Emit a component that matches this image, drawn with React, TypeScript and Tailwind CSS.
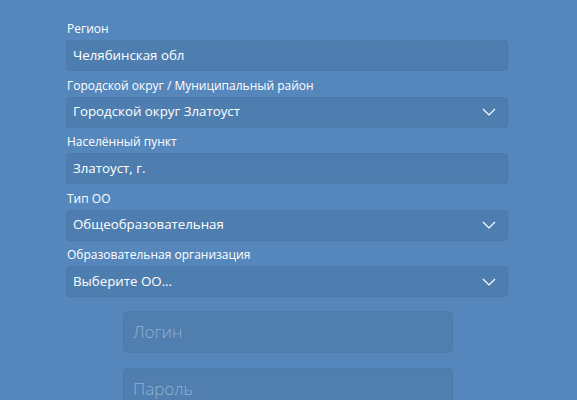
import React from "react";

const Chevron = () => (
  <svg width="14" height="8" viewBox="0 0 14 8" className="absolute right-[11px] top-1/2 -translate-y-1/2">
    <path d="M1 1 L7 7 L13 1" fill="none" stroke="#ffffff" strokeWidth="1.2" />
  </svg>
);

const Field = ({ label, value, select }: { label: string; value: string; select?: boolean }) => (
  <div className="flex flex-col">
    <div className="text-[12px] leading-[16px] text-white h-[16px] pl-[1px]">{label}</div>
    <div className="relative mt-[3px] h-[31px] rounded-[4px] bg-[#4e7eb0] border border-[#4a79aa] flex items-center pl-[6px] text-[13.3px] text-white">
      {value}
      {select && <Chevron />}
    </div>
  </div>
);

export default function App() {
  return (
    <div
      className="w-[577px] h-[400px] overflow-hidden bg-[#5587bc]"
      style={{ fontFamily: '"Open Sans", "Noto Sans", sans-serif' }}
    >
      <div className="pt-[21px] pl-[66px] w-[508px] flex flex-col gap-[6.5px]">
        <Field label="Регион" value="Челябинская обл" />
        <Field label="Городской округ / Муниципальный район" value="Городской округ Златоуст" select />
        <Field label="Населённый пункт" value="Златоуст, г." />
        <Field label="Тип ОО" value="Общеобразовательная" select />
        <Field label="Образовательная организация" value="Выберите ОО..." select />
      </div>
      <div className="pl-[123px] mt-[14px] w-[453px] flex flex-col gap-[15px]">
        <div className="h-[42px] rounded-[5px] bg-[#4f7eaf] border border-[#4b7aab] flex items-center pl-[9px] text-[17px] font-light text-[#8fb1d4]">
          Логин
        </div>
        <div className="h-[42px] rounded-[5px] bg-[#4f7eaf] border border-[#4b7aab] flex items-center pl-[9px] text-[17px] font-light text-[#8fb1d4]">
          Пароль
        </div>
      </div>
    </div>
  );
}
